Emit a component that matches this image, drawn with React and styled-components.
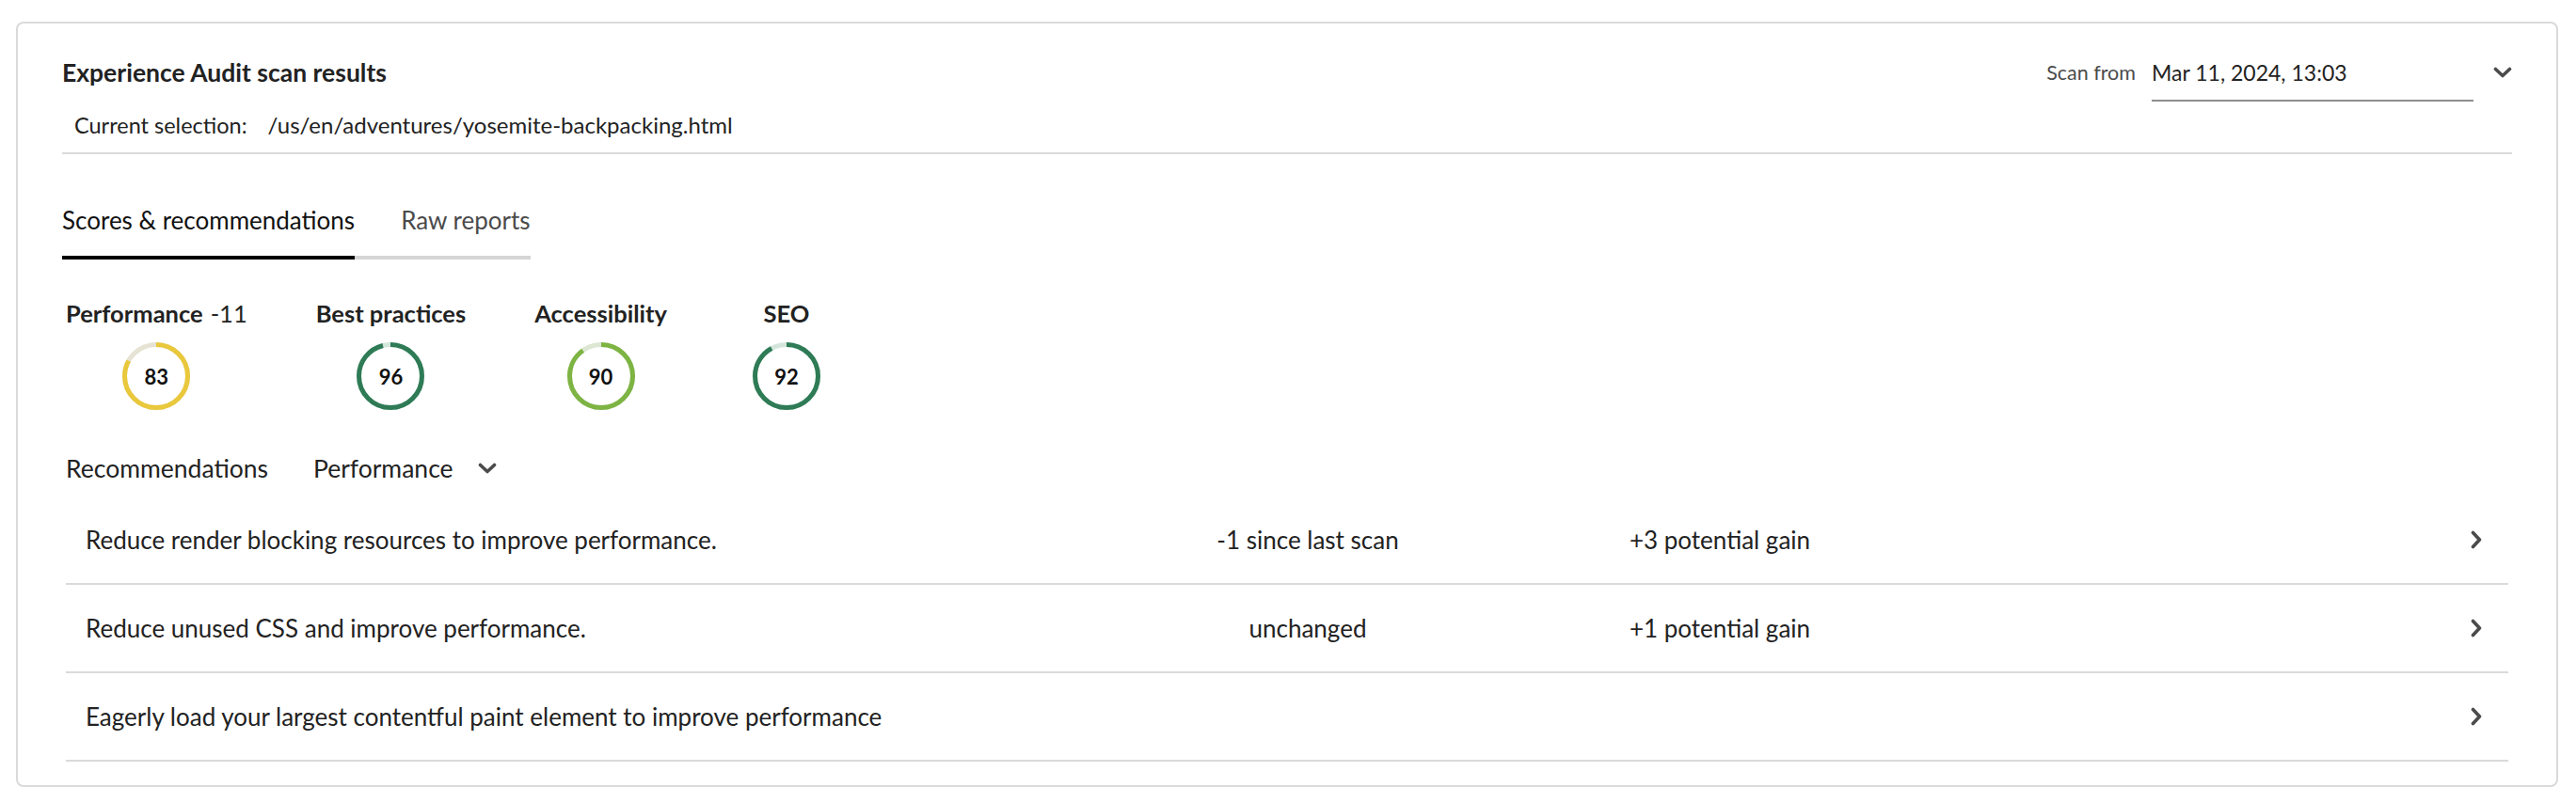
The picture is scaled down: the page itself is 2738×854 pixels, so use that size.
import React from "react";
import styled, { createGlobalStyle } from "styled-components";

const GlobalStyle = createGlobalStyle`
  body {
    margin: 0;
    background: #fff;
    font-family: Lato, "Liberation Sans", sans-serif;
    color: #222;
  }
`;

const scores = [
  { label: "Performance", delta: "-11", value: 83, color: "#e9c83c", track: "#e6e3d4" },
  { label: "Best practices", value: 96, color: "#2e7b56", track: "#d4e6dc" },
  { label: "Accessibility", value: 90, color: "#7db443", track: "#dce6d2" },
  { label: "SEO", value: 92, color: "#2e7b56", track: "#d4e6dc" },
];

const recommendations = [
  { text: "Reduce render blocking resources to improve performance.", change: "-1 since last scan", gain: "+3 potential gain" },
  { text: "Reduce unused CSS and improve performance.", change: "unchanged", gain: "+1 potential gain" },
  { text: "Eagerly load your largest contentful paint element to improve performance", change: "", gain: "" },
];

function ChevronDown() {
  return (
    <svg width="20" height="12" viewBox="0 0 20 12">
      <path d="M2.5 2.5 L10 9.5 L17.5 2.5" fill="none" stroke="#4b4b4b" strokeWidth="3.6" strokeLinecap="round" strokeLinejoin="round" />
    </svg>
  );
}

function ChevronRight() {
  return (
    <svg width="12" height="20" viewBox="0 0 12 20">
      <path d="M2.5 2.5 L9.5 10 L2.5 17.5" fill="none" stroke="#4b4b4b" strokeWidth="3.6" strokeLinecap="round" strokeLinejoin="round" />
    </svg>
  );
}

function Gauge({ value, color, track }) {
  const r = 33.5;
  const c = 2 * Math.PI * r;
  return (
    <GaugeWrap>
      <svg width="72" height="72" viewBox="0 0 72 72">
        <circle cx="36" cy="36" r={r} fill="none" stroke={track} strokeWidth="5" />
        <circle
          cx="36"
          cy="36"
          r={r}
          fill="none"
          stroke={color}
          strokeWidth="5"
          strokeDasharray={`${(c * value) / 100} ${c}`}
          transform="rotate(-90 36 36)"
        />
      </svg>
      <GaugeValue>{value}</GaugeValue>
    </GaugeWrap>
  );
}

export default function App() {
  return (
    <>
      <GlobalStyle />
      <Page>
        <Card>
          <Header>
            <HeaderLeft>
              <Title>Experience Audit scan results</Title>
              <Selection>
                <span>Current selection:</span>
                <SelectionPath>/us/en/adventures/yosemite-backpacking.html</SelectionPath>
              </Selection>
            </HeaderLeft>
            <ScanPicker>
              <ScanLabel>Scan from</ScanLabel>
              <ScanField>Mar 11, 2024, 13:03</ScanField>
              <IconButton>
                <ChevronDown />
              </IconButton>
            </ScanPicker>
          </Header>

          <TabList>
            <Tab $active>Scores &amp; recommendations</Tab>
            <Tab>Raw reports</Tab>
          </TabList>

          <Scores>
            {scores.map((s) => (
              <ScoreBlock key={s.label}>
                <ScoreLabel>
                  {s.label}
                  {s.delta && <Delta>{s.delta}</Delta>}
                </ScoreLabel>
                <Gauge value={s.value} color={s.color} track={s.track} />
              </ScoreBlock>
            ))}
          </Scores>

          <FilterRow>
            <span>Recommendations</span>
            <FilterPicker>
              Performance
              <ChevronDown />
            </FilterPicker>
          </FilterRow>

          <List>
            {recommendations.map((r) => (
              <Row key={r.text}>
                <RowText>{r.text}</RowText>
                <RowCell>{r.change}</RowCell>
                <RowCell>{r.gain}</RowCell>
                <span />
                <ChevronRight />
              </Row>
            ))}
          </List>
        </Card>
      </Page>
    </>
  );
}

const Page = styled.div`
  padding: 23px 19px 19px 17px;
`;

const Card = styled.div`
  border: 2px solid #dadada;
  border-radius: 8px;
  padding: 34px 47px 25px;
  min-height: 749px;
`;

const Header = styled.div`
  display: flex;
  justify-content: space-between;
  align-items: flex-start;
  padding-bottom: 11px;
  border-bottom: 2px solid #dadada;
`;

const HeaderLeft = styled.div`
  display: flex;
  flex-direction: column;
  gap: 20px;
`;

const Title = styled.h1`
  margin: 0;
  font-size: 26.5px;
  line-height: 36px;
  font-weight: 700;
  color: #222;
`;

const Selection = styled.div`
  padding-left: 13px;
  font-size: 23.5px;
  line-height: 36px;
  color: #222;
`;

const SelectionPath = styled.span`
  margin-left: 22px;
  font-size: 24px;
`;

const ScanPicker = styled.div`
  display: flex;
  align-items: flex-start;
`;

const ScanLabel = styled.span`
  font-size: 21.5px;
  line-height: 36px;
  color: #4b4b4b;
  margin-right: 17px;
`;

const ScanField = styled.div`
  width: 342px;
  font-size: 23px;
  line-height: 36px;
  padding-bottom: 11px;
  border-bottom: 2px solid #8e8e8e;
  color: #222;
`;

const IconButton = styled.div`
  display: flex;
  align-items: center;
  height: 36px;
  margin-left: 21px;
`;

const TabList = styled.div`
  display: inline-flex;
  margin-top: 52px;
`;

const Tab = styled.div`
  font-size: 26px;
  line-height: 36px;
  padding-bottom: 20px;
  border-bottom: 4px solid ${(p) => (p.$active ? "#000" : "#d5d5d5")};
  color: ${(p) => (p.$active ? "#111" : "#4b4b4b")};

  & + & {
    padding-left: 49px;
  }
`;

const Scores = styled.div`
  display: flex;
  gap: 73px;
  margin-top: 39px;
  padding-left: 4px;
`;

const ScoreBlock = styled.div`
  display: flex;
  flex-direction: column;
  align-items: center;
  gap: 13px;
  min-width: 108px;
`;

const ScoreLabel = styled.div`
  font-size: 25.5px;
  line-height: 36px;
  font-weight: 700;
  color: #222;
  white-space: nowrap;
`;

const Delta = styled.span`
  margin-left: 8px;
  font-weight: 400;
`;

const GaugeWrap = styled.div`
  position: relative;
  width: 72px;
  height: 72px;
`;

const GaugeValue = styled.span`
  position: absolute;
  inset: 0;
  display: flex;
  align-items: center;
  justify-content: center;
  font-size: 22px;
  font-weight: 700;
  color: #111;
`;

const FilterRow = styled.div`
  display: flex;
  align-items: center;
  gap: 48px;
  margin-top: 44px;
  padding-left: 4px;
  font-size: 26.5px;
  line-height: 36px;
  color: #222;
`;

const FilterPicker = styled.div`
  display: flex;
  align-items: center;
  gap: 26px;
`;

const List = styled.div`
  margin-top: 12px;
  padding: 0 4px;
`;

const Row = styled.div`
  display: grid;
  grid-template-columns: 1159px 280px 596px 1fr 12px;
  align-items: center;
  height: 92px;
  padding: 0 28px 0 21px;
  border-bottom: 2px solid #dadada;
  font-size: 26px;
  color: #222;
`;

const RowText = styled.span`
  white-space: nowrap;
`;

const RowCell = styled.span`
  text-align: center;
`;
